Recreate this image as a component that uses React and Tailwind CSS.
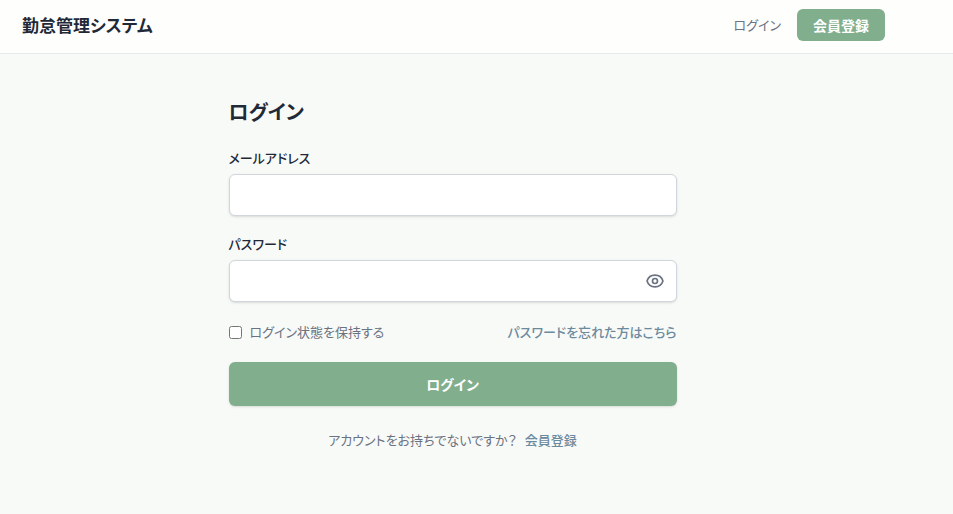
import { useState } from "react";

function Header() {
  return (
    <header className="flex h-[54px] items-center justify-between border-b border-[#e5e7eb] bg-[#fefefc] pr-[68px] pb-1 pl-[22px]">
      <a href="#" className="text-[17px] leading-6 font-bold text-[#1f2937]">勤怠管理システム</a>
      <nav className="flex items-center gap-4">
        <a href="#login" className="text-[13px] leading-5 text-[#6b7280]">ログイン</a>
        <a href="#register" className="rounded-md bg-[#81ae8d] px-4 py-[6px] text-sm font-bold text-white">会員登録</a>
      </nav>
    </header>
  );
}

function EyeIcon() {
  return (
    <svg viewBox="0 0 24 24" className="size-5" fill="none" stroke="currentColor" strokeWidth="2" strokeLinecap="round" strokeLinejoin="round" aria-hidden="true">
      <path d="M15 12a3 3 0 11-6 0 3 3 0 016 0z" />
      <path d="M2.458 12C3.732 7.943 7.523 5 12 5c4.478 0 8.268 2.943 9.542 7-1.274 4.057-5.064 7-9.542 7-4.477 0-8.268-2.943-9.542-7z" />
    </svg>
  );
}

export default function App() {
  const [visible, setVisible] = useState(false);
  return (
    <div className="min-h-screen bg-[#f8faf8] font-['Noto_Sans_CJK_JP',sans-serif] text-[#1f2937] [font-feature-settings:'palt']">
      <Header />
      <div className="pr-12">
        <main className="mx-auto w-full max-w-md pt-10">
          <h1 className="text-[20px] leading-9 font-bold">ログイン</h1>
          <form className="mt-5" onSubmit={(e) => e.preventDefault()}>
            <label htmlFor="email" className="block text-[13px] leading-4 font-medium">メールアドレス</label>
            <input id="email" type="email" className="mt-2 block h-[42px] w-full rounded-md border border-gray-300 bg-white px-3 shadow-sm" />
            <label htmlFor="password" className="mt-5 block text-[13px] leading-4 font-medium">パスワード</label>
            <div className="relative mt-2">
              <input id="password" type={visible ? "text" : "password"} className="block h-[42px] w-full rounded-md border border-gray-300 bg-white pr-10 pl-3 shadow-sm" />
              <button type="button" aria-label="パスワードを表示" onClick={() => setVisible(!visible)} className="absolute inset-y-0 right-0 flex items-center pr-3 text-gray-500">
                <EyeIcon />
              </button>
            </div>
            <div className="mt-5 flex items-center justify-between text-[13px] leading-5">
              <label className="flex items-center gap-2 text-[#6b7280]">
                <input type="checkbox" className="size-[13px]" />
                ログイン状態を保持する
              </label>
              <a href="#reset" className="font-medium text-[#6b8a9e]">パスワードを忘れた方はこちら</a>
            </div>
            <button type="submit" className="mt-5 h-11 w-full rounded-md bg-[#81ae8d] text-sm font-bold text-white shadow-sm">ログイン</button>
          </form>
          <p className="mt-6 flex items-baseline justify-center gap-2 text-[13px] leading-5 text-[#6b7280]">
            <span>アカウントをお持ちでないですか？</span>
            <a href="#register" className="text-[13px] font-medium text-[#6b8a9e]">会員登録</a>
          </p>
        </main>
      </div>
    </div>
  );
}
